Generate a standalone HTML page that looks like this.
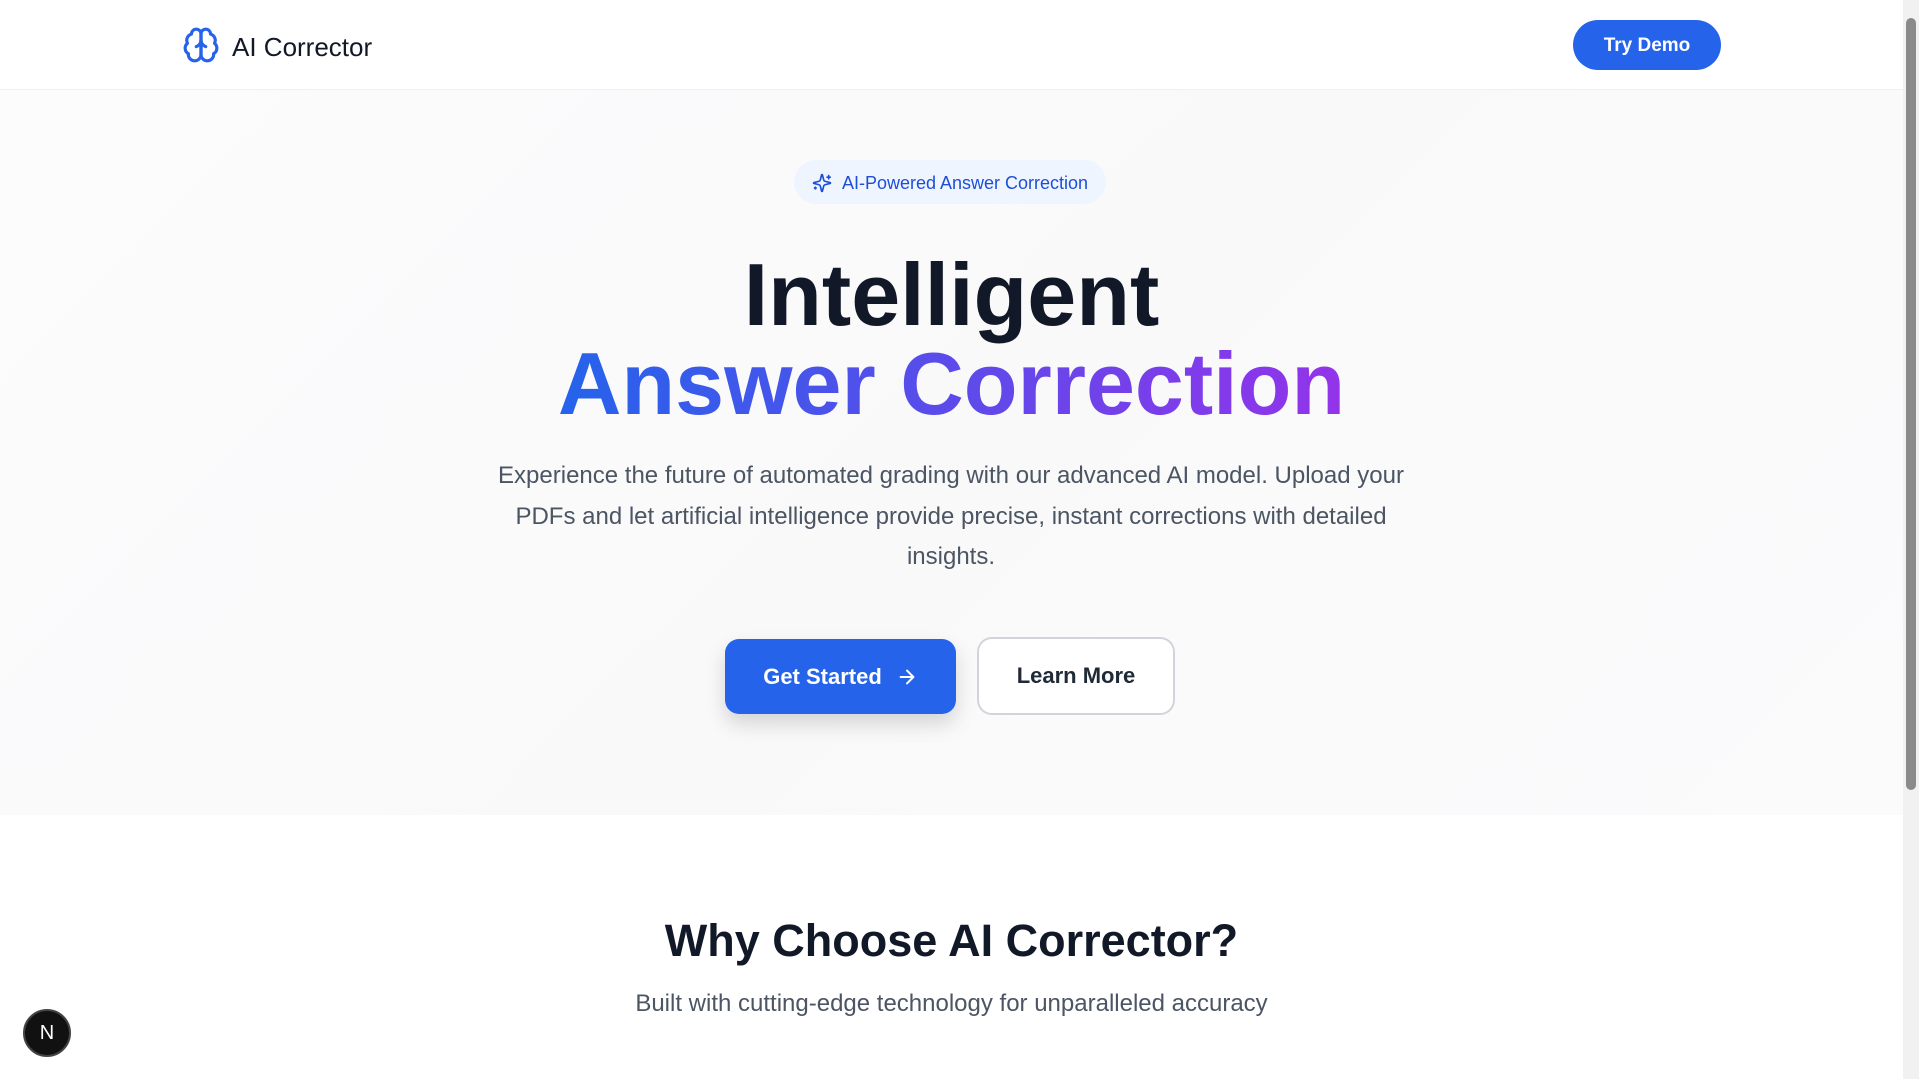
<!DOCTYPE html>
<html><head><meta charset="utf-8"><style>
*{margin:0;padding:0;box-sizing:border-box}
html,body{width:1919px;height:1079px;overflow:hidden;background:#fff;font-family:"Liberation Sans",Arial,sans-serif;color:#111827}
.header{position:absolute;left:0;top:0;width:1903px;height:90px;background:#fff;border-bottom:1px solid #eef0f3}
.logo{position:absolute;left:182px;top:26px;display:flex;align-items:center}
.logo span{font-size:26px;margin-left:12px;color:#111827;position:relative;top:2px}
.demo{position:absolute;left:1573px;top:20px;width:148px;height:50px;border-radius:25px;background:#2563eb;color:#fff;font-weight:bold;font-size:19px;display:flex;align-items:center;justify-content:center;padding-top:2px}
.hero{position:absolute;left:0;top:90px;width:1903px;height:725px;background:linear-gradient(135deg,#fcfcfd,#f9f9fa 50%,#fbfbfc)}
.badge{position:absolute;left:794px;top:160px;width:312px;height:44px;border-radius:22px;background:#eff5ff;color:#1d4ed8;font-size:18px;display:flex;align-items:center;justify-content:center;gap:10px;padding-top:2px}
h1{position:absolute;left:0;width:1903px;text-align:center;font-size:88px;font-weight:bold;line-height:89px;top:250px}
.grad{background:linear-gradient(90deg,#2563eb,#9333ea);-webkit-background-clip:text;background-clip:text;color:transparent}
.p{position:absolute;left:491px;top:456px;width:920px;text-align:center;font-size:24px;line-height:40.5px;color:#4b5563}
.gs{position:absolute;left:725px;top:639px;width:231px;height:75px;border-radius:14px;background:#2563eb;color:#fff;font-size:22px;font-weight:bold;display:flex;align-items:center;justify-content:center;gap:14px;box-shadow:0 10px 20px rgba(0,0,0,.15)}
.lm{position:absolute;left:977px;top:637px;width:198px;height:78px;border-radius:15px;background:#fff;border:2px solid #d1d5db;color:#1f2937;font-size:22px;font-weight:bold;display:flex;align-items:center;justify-content:center}
.why{position:absolute;left:0;width:1903px;top:915px;text-align:center;font-size:45px;font-weight:bold;color:#111827}
.sub{position:absolute;left:0;width:1903px;top:990px;text-align:center;font-size:24px;color:#4b5563}
.n{position:absolute;left:23px;top:1009px;width:48px;height:48px;border-radius:50%;background:#111;border:2px solid #444;color:#fff;font-size:20px;display:flex;align-items:center;justify-content:center}
.sb{position:absolute;left:1903px;top:0;width:16px;height:1079px;background:#f1f1f1}
.th{position:absolute;left:1906px;top:18px;width:10px;height:772px;border-radius:5px;background:#8a8a8a}
</style></head><body>
<div class="header">
<div class="logo"><svg width="38" height="38" viewBox="0 0 24 24" fill="none" stroke="#2563eb" stroke-width="2" stroke-linecap="round" stroke-linejoin="round"><path d="M12 5a3 3 0 1 0-5.997.125 4 4 0 0 0-2.526 5.77 4 4 0 0 0 .556 6.588A4 4 0 1 0 12 18Z"/><path d="M12 5a3 3 0 1 1 5.997.125 4 4 0 0 1 2.526 5.77 4 4 0 0 1-.556 6.588A4 4 0 1 1 12 18Z"/><path d="M15 13a4.5 4.5 0 0 1-3-4 4.5 4.5 0 0 1-3 4"/><path d="M12 18V5"/></svg><span>AI Corrector</span></div>
<div class="demo">Try Demo</div>
</div>
<div class="hero"></div>
<div class="badge"><svg width="20" height="20" viewBox="0 0 24 24" fill="none" stroke="#1d4ed8" stroke-width="2" stroke-linecap="round" stroke-linejoin="round"><path d="M9.9 15.5A2 2 0 0 0 8.5 14.1L2.4 12.5a.5.5 0 0 1 0-1l6.1-1.6A2 2 0 0 0 9.9 8.5l1.6-6.1a.5.5 0 0 1 1 0l1.6 6.1a2 2 0 0 0 1.4 1.4l6.1 1.6a.5.5 0 0 1 0 1l-6.1 1.6a2 2 0 0 0-1.4 1.4l-1.6 6.1a.5.5 0 0 1-1 0z"/><path d="M20 3v4M22 5h-4M4 17v2M5 18H3"/></svg>AI-Powered Answer Correction</div>
<h1>Intelligent<br><span class="grad">Answer Correction</span></h1>
<div class="p">Experience the future of automated grading with our advanced AI model. Upload your PDFs and let artificial intelligence provide precise, instant corrections with detailed insights.</div>
<div class="gs">Get Started <svg width="22" height="22" viewBox="0 0 24 24" fill="none" stroke="#fff" stroke-width="2.2" stroke-linecap="round" stroke-linejoin="round"><path d="M5 12h14M12 5l7 7-7 7"/></svg></div>
<div class="lm">Learn More</div>
<div class="why">Why Choose AI Corrector?</div>
<div class="sub">Built with cutting-edge technology for unparalleled accuracy</div>
<div class="n">N</div>
<div class="sb"></div><div class="th"></div>
</body></html>
